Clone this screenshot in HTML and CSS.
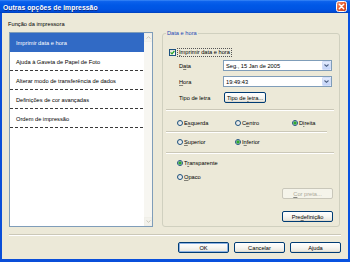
FILE: index.html
```html
<!DOCTYPE html>
<html>
<head>
<meta charset="utf-8">
<link rel="stylesheet" href="styles.css">
</head>
<body>
<div class="window">
  <div class="titlebar">
    <span class="title">Outras opções de impressão</span>
    <span class="close">
      <svg width="11" height="11" viewBox="0 0 11 11">
        <defs>
          <linearGradient id="cg" x1="0" y1="0" x2="1" y2="1">
            <stop offset="0" stop-color="#F29A7E"/>
            <stop offset="0.5" stop-color="#E35A2E"/>
            <stop offset="1" stop-color="#C8401C"/>
          </linearGradient>
        </defs>
        <rect x="0.5" y="0.5" width="10" height="10" rx="2" fill="url(#cg)" stroke="#FFFFFF" stroke-width="1"/>
        <path d="M3.3 3.3 L7.7 7.7 M7.7 3.3 L3.3 7.7" stroke="#FFFFFF" stroke-width="1.5" stroke-linecap="round"/>
      </svg>
    </span>
  </div>
  <div class="frame">
    <div class="client">
      <div class="main">
        <div class="leftcol">
          <div class="fn-label">Função da impressora</div>
          <div class="listbox">
            <div class="items">
              <div class="item sel">Imprimir data e hora</div>
              <div class="item">Ajuda à Gaveta de Papel de Foto</div>
              <div class="item">Alterar modo de transferência de dados</div>
              <div class="item">Definições de cor avançadas</div>
              <div class="item">Ordem de impressão</div>
            </div>
            <div class="scrollbar">
              <div class="sb-btn">
                <svg width="5" height="3" viewBox="0 0 5 3"><path d="M0.5 2.5 L2.5 0.7 L4.5 2.5" fill="none" stroke="#C8C6BA" stroke-width="1"/></svg>
              </div>
              <div class="sb-btn">
                <svg width="5" height="3" viewBox="0 0 5 3"><path d="M0.5 0.5 L2.5 2.3 L4.5 0.5" fill="none" stroke="#C8C6BA" stroke-width="1"/></svg>
              </div>
            </div>
          </div>
        </div>
        <div class="group">
          <div class="legend">Data e hora</div>
          <div class="cb-row">
            <span class="chk">
              <svg width="5" height="5" viewBox="0 0 5 5"><path d="M0.6 2.4 L2 3.8 L4.4 1" fill="none" stroke="#21A121" stroke-width="1.2"/></svg>
            </span>
            <span class="cb-text"><u>I</u>mprimir data e hora</span>
          </div>
          <div class="frow r-data">
            <span class="lbl">D<u>a</u>ta</span>
            <div class="combo">
              <span class="val">Seg., 15 Jan de 2005</span>
              <span class="drop"><svg width="5" height="3" viewBox="0 0 5 3"><path d="M0.5 0.5 L2.5 2.3 L4.5 0.5" fill="none" stroke="#4D6185" stroke-width="1.1"/></svg></span>
            </div>
          </div>
          <div class="frow r-hora">
            <span class="lbl"><u>H</u>ora</span>
            <div class="combo">
              <span class="val">19:49:43</span>
              <span class="drop"><svg width="5" height="3" viewBox="0 0 5 3"><path d="M0.5 0.5 L2.5 2.3 L4.5 0.5" fill="none" stroke="#4D6185" stroke-width="1.1"/></svg></span>
            </div>
          </div>
          <div class="frow r-tipo">
            <span class="lbl lbl-tipo">Tipo de letra</span>
            <span class="btn btn-tipo"><span>Tipo de <u>l</u>etra...</span></span>
          </div>
          <div class="etch sep1"></div>
          <div class="rrow r1">
            <span class="ropt w58"><span class="radio"></span><span>E<u>s</u>querda</span></span>
            <span class="ropt w57"><span class="radio"></span><span>C<u>e</u>ntro</span></span>
            <span class="ropt"><span class="radio on"></span><span>D<u>i</u>reita</span></span>
          </div>
          <div class="etch sep2"></div>
          <div class="rrow r2">
            <span class="ropt w58"><span class="radio"></span><span><u>S</u>uperior</span></span>
            <span class="ropt"><span class="radio on"></span><span>I<u>n</u>ferior</span></span>
          </div>
          <div class="etch sep3"></div>
          <div class="rrow r3">
            <span class="ropt"><span class="radio on"></span><span>T<u>r</u>ansparente</span></span>
          </div>
          <div class="rrow r4">
            <span class="ropt"><span class="radio"></span><span><u>O</u>paco</span></span>
          </div>
          <div class="gbtns g1">
            <span class="btn disabled"><span><u>C</u>or preta...</span></span>
          </div>
          <div class="gbtns g2">
            <span class="btn"><span>Pre<u>d</u>efinição</span></span>
          </div>
        </div>
      </div>
      <div class="etch sep-main"></div>
      <div class="bottom">
        <span class="btn def">OK</span>
        <span class="btn">Cancelar</span>
        <span class="btn">Ajuda</span>
      </div>
    </div>
  </div>
</div>
</body>
</html>
```
FILE: styles.css
```css
* { box-sizing: border-box; }
html, body { margin: 0; padding: 0; }
body {
  width: 350px;
  height: 262px;
  overflow: hidden;
  font-family: "Liberation Sans", Arial, sans-serif;
  font-size: 5.7px;
  color: #000;
  background: #ECE9D8;
}
u {
  text-decoration-thickness: 0.5px;
  text-underline-offset: 0.5px;
  text-decoration-color: rgba(0, 0, 0, 0.45);
}

.window {
  width: 350px;
  height: 262px;
  display: flex;
  flex-direction: column;
}
.titlebar {
  height: 13px;
  flex: none;
  display: flex;
  align-items: center;
  justify-content: space-between;
  padding: 0 3px 0 3px;
  background: linear-gradient(#3D8AF7 0%, #0B61EC 12%, #0058E6 40%, #0054E3 70%, #004BD6 90%, #003FB8 100%);
}
.title {
  color: #fff;
  font-weight: bold;
  font-size: 6.8px;
  letter-spacing: 0.05px;
  text-shadow: 0.5px 0.5px 0 #0A2A8A;
  line-height: 13px;
  padding-top: 1px;
}
.close { display: flex; width: 11px; height: 11px; }

.frame {
  flex: 1;
  display: flex;
  padding: 0 2px 3px 2px;
  background: linear-gradient(to right, #0A4ED8, #0852E0);
}
.client {
  flex: 1;
  display: flex;
  flex-direction: column;
  padding: 7px 7px 0 7px;
  background: #ECE9D8;
}

.main { display: flex; gap: 9px; }
.leftcol { width: 144px; display: flex; flex-direction: column; }
.fn-label { height: 8px; line-height: 8px; margin-left: -1px; margin-bottom: 4px; }
.listbox {
  height: 195px;
  border: 1px solid #7F9DB9;
  background: #fff;
  display: flex;
}
.items { flex: 1; }
.item {
  height: 19px;
  display: flex;
  align-items: center;
  padding-left: 6px;
  background: repeating-linear-gradient(to right, #3A3A3A 0 3px, transparent 3px 5px) left bottom / 100% 1px no-repeat;
}
.item.sel { background: #316AC5; color: #fff; }
.scrollbar {
  width: 8px;
  background: #F7F6F1;
  display: flex;
  flex-direction: column;
  justify-content: space-between;
}
.sb-btn {
  height: 9px;
  display: flex;
  align-items: center;
  justify-content: center;
  background: #F3F2EC;
  border: 1px solid #F0EFE8;
}

.group {
  width: 178px;
  height: 194px;
  margin-top: 13px;
  border: 1px solid #D0D0BF;
  border-radius: 3px;
}
.legend {
  width: max-content;
  height: 8px;
  line-height: 8px;
  margin: -5px 0 0 3px;
  padding: 0 1px;
  background: #ECE9D8;
  color: #1D48B5;
}
.cb-row {
  margin-top: 11px;
  height: 9px;
  display: flex;
  align-items: center;
  padding-left: 6px;
}
.chk {
  width: 7px;
  height: 7px;
  border: 1px solid #1C5180;
  background: linear-gradient(135deg, #DCDCD6, #FFFFFF);
  display: flex;
  align-items: center;
  justify-content: center;
}
.cb-text {
  margin-left: 1px;
  height: 9px;
  line-height: 7px;
  padding: 0 1px;
  border: 1px dotted #555;
}
.frow {
  display: flex;
  align-items: center;
  height: 11px;
  padding-left: 16px;
}
.r-data { margin-top: 3px; }
.r-hora { margin-top: 5px; }
.r-tipo { margin-top: 5px; }
.lbl { width: 44px; }
.lbl-tipo { width: 45px; }
.combo {
  width: 109px;
  height: 11px;
  border: 1px solid #7F9DB9;
  background: #fff;
  display: flex;
  align-items: center;
}
.combo .val { flex: 1; padding-left: 2px; }
.combo .drop {
  width: 9px;
  height: 9px;
  border: 1px solid #D3DEF8;
  border-radius: 1px;
  background: linear-gradient(#E3EBFD, #C2D3F8);
  display: flex;
  align-items: center;
  justify-content: center;
}

.btn {
  height: 11px;
  display: flex;
  align-items: center;
  justify-content: center;
  border: 1px solid #003C74;
  border-radius: 2px;
  background: linear-gradient(#FFFFFF 0%, #F6F5F1 50%, #ECEAE2 85%, #D8D2C4 100%);
}
.btn-tipo { width: 42px; }
.btn.disabled {
  border-color: #C9C7BA;
  color: #ACA899;
  background: #F5F4EA;
}
.btn.def { box-shadow: inset 0 0 0 1px #8DB2E3; }

.etch {
  height: 2px;
  border-top: 1px solid #CBC8B8;
  border-bottom: 1px solid #FFFFFF;
  margin-left: 3px;
}
.sep1 { margin-top: 6px; width: 168px; }
.sep2 { margin-top: 4px; width: 161px; }
.sep3 { margin-top: 6px; width: 168px; }

.rrow {
  display: flex;
  align-items: center;
  height: 9px;
  padding-left: 14px;
}
.r1 { margin-top: 7px; }
.r2 { margin-top: 4px; }
.r3 { margin-top: 4px; }
.r4 { margin-top: 5px; }
.ropt { display: flex; align-items: center; gap: 1px; }
.w58 { width: 58px; }
.w57 { width: 57px; }
.radio {
  width: 6px;
  height: 6px;
  border-radius: 50%;
  border: 1px solid #1C5180;
  background: linear-gradient(135deg, #D8D8D2, #FFFFFF);
}
.radio.on {
  background: radial-gradient(circle, #2FA82F 0 1.3px, #7BC97B 1.6px, #FFFFFF 2px);
}

.gbtns {
  display: flex;
  justify-content: flex-end;
  padding-right: 6px;
}
.gbtns .btn { width: 51px; }
.g1 { margin-top: 7px; }
.g2 { margin-top: 12px; }

.sep-main { margin: 7px 0 0 0; }
.bottom {
  margin-top: 6px;
  display: flex;
  justify-content: flex-end;
  gap: 5px;
}
.bottom .btn { width: 51px; }
```
